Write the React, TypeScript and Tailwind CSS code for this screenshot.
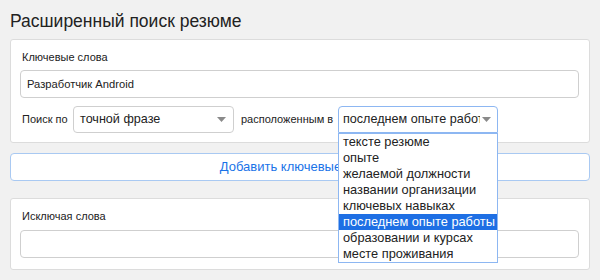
import React from "react";

const options = [
  "тексте резюме",
  "опыте",
  "желаемой должности",
  "названии организации",
  "ключевых навыках",
  "последнем опыте работы",
  "образовании и курсах",
  "месте проживания",
];

function Arrow() {
  return (
    <svg width="9" height="5" viewBox="0 0 9 5" className="shrink-0">
      <path d="M0 0 L9 0 L4.5 5 Z" fill="#8a8a8a" />
    </svg>
  );
}

export default function App() {
  const selected = 5;

  return (
    <div className="w-[600px] h-[280px] overflow-hidden bg-[#f1f1f1] px-[10px] font-['Liberation_Sans',Arial,sans-serif] text-[#222]">
      <h1 className="h-[39px] pt-[11px] text-[17.5px] leading-[20px]">Расширенный поиск резюме</h1>

      {/* Ключевые слова */}
      <div className="rounded-[3px] border border-[#dcdcdc] bg-white pl-[9px] pr-[10px] pt-[10px] pb-[9px]">
        <div className="h-[14px] pl-[2px] text-[11px] leading-[14px]">Ключевые слова</div>
        <div className="mt-[6px] flex h-[28px] items-center rounded-[4px] border border-[#cfcfcf] px-[6px] text-[11.2px]">
          Разработчик Android
        </div>
        <div className="mt-[8px] flex h-[27px] items-center whitespace-nowrap text-[11px]">
          <span className="w-[53px] shrink-0 pl-[2px]">Поиск по</span>
          <div className="flex h-full w-[161px] shrink-0 items-center justify-between rounded-[4px] border border-[#cfcfcf] pl-[6px] pr-[7px] text-[12.6px]">
            <span>точной фразе</span>
            <Arrow />
          </div>
          <span className="ml-[7px] w-[97px] shrink-0">расположенным в</span>
          <div className="relative h-full w-[160px] shrink-0">
            <div className="flex h-full items-center justify-between rounded-t-[4px] border border-[#8db7f2] pl-[4px] pr-[6px] text-[12.6px]">
              <span className="w-[137px] overflow-hidden">последнем опыте работы</span>
              <Arrow />
            </div>
            <ul className="absolute left-0 top-full z-10 w-[160px] border border-[#8db7f2] bg-white text-[12.8px] leading-[16px]">
              {options.map((o, i) => (
                <li
                  key={o}
                  className={
                    i === selected
                      ? "h-[16px] overflow-hidden bg-[#1e6fe4] pl-[4px] text-white"
                      : "h-[16px] overflow-hidden pl-[4px] text-[#222]"
                  }
                >
                  {o}
                </li>
              ))}
            </ul>
          </div>
        </div>
      </div>

      <button className="mt-[10px] flex h-[28px] w-full items-center justify-center rounded-[4px] border border-[#a9c9f2] bg-white text-[13px] text-[#1a73e8]">
        Добавить ключевые слова
      </button>

      {/* Исключая слова */}
      <div className="mt-[17px] rounded-[3px] border border-[#dcdcdc] bg-white pl-[9px] pr-[10px] pt-[10px] pb-[11px]">
        <div className="h-[14px] pl-[2px] text-[11px] leading-[14px]">Исключая слова</div>
        <div className="mt-[7px] h-[28px] rounded-[4px] border border-[#cfcfcf]" />
      </div>
    </div>
  );
}
